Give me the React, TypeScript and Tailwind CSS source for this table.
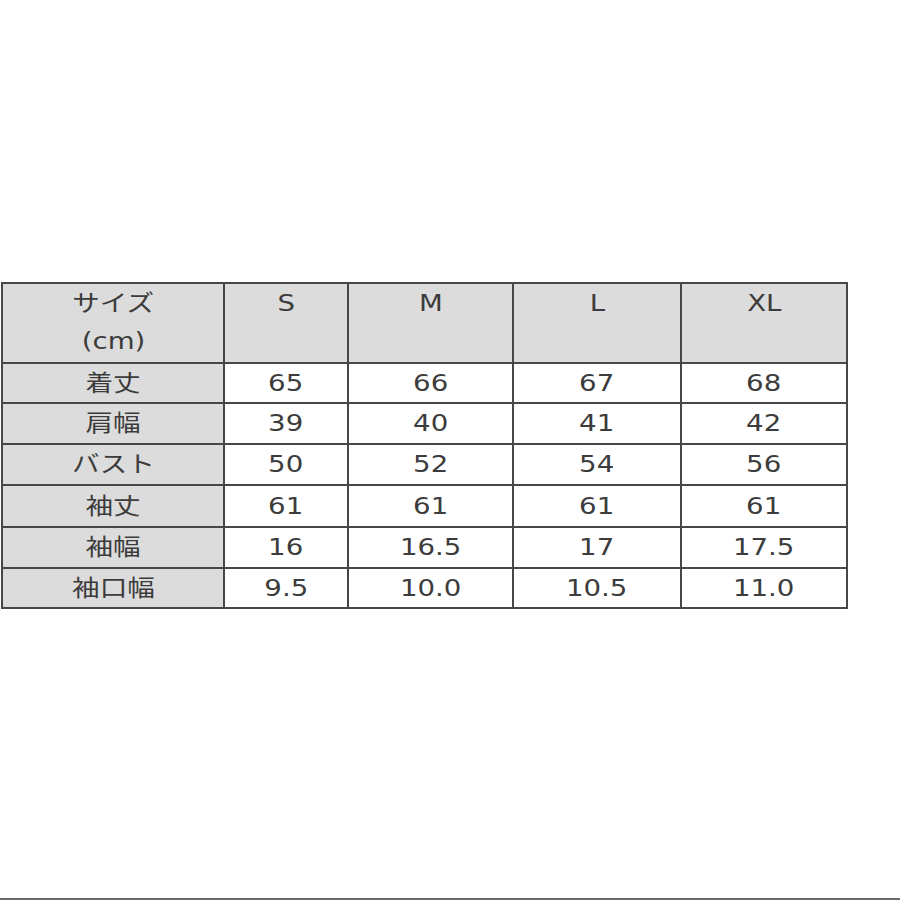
import React from "react";

const cols = ["S", "M", "L", "XL"];
const rows: { label: string; vals: string[]; h: string }[] = [
  { label: "着丈", vals: ["65", "66", "67", "68"], h: "h-[38px]" },
  { label: "肩幅", vals: ["39", "40", "41", "42"], h: "h-[39px]" },
  { label: "バスト", vals: ["50", "52", "54", "56"], h: "h-[39px]" },
  { label: "袖丈", vals: ["61", "61", "61", "61"], h: "h-[40px]" },
  { label: "袖幅", vals: ["16", "16.5", "17", "17.5"], h: "h-[39px]" },
  { label: "袖口幅", vals: ["9.5", "10.0", "10.5", "11.0"], h: "h-[38px]" },
];

function T({ children }: { children: React.ReactNode }) {
  return <span className="inline-block scale-x-[1.2]">{children}</span>;
}

export default function App() {
  return (
    <div
      className="w-[900px] h-[900px] bg-white flex flex-col text-[#3c3c3c] text-[23px]"
      style={{ fontFamily: '"DejaVu Sans", "Noto Sans CJK JP", sans-serif' }}
    >
      <div className="pt-[282px] pl-[1px]">
        <div className="inline-grid grid-cols-[220px_122px_163px_166px_164px] gap-[2px] p-[2px] bg-[#474747]">
          <div className="bg-[#dcdcdc] h-[78px] flex flex-col items-center leading-[38px]">
            <T>サイズ</T>
            <T>(cm)</T>
          </div>
          {cols.map((c) => (
            <div key={c} className="bg-[#dcdcdc] h-[78px] flex justify-center leading-[38px]">
              <T>{c}</T>
            </div>
          ))}
          {rows.map((r) => (
            <React.Fragment key={r.label}>
              <div className={`bg-[#dcdcdc] ${r.h} flex items-center justify-center`}>
                <T>{r.label}</T>
              </div>
              {r.vals.map((v, i) => (
                <div key={i} className={`bg-white ${r.h} flex items-center justify-center`}>
                  <T>{v}</T>
                </div>
              ))}
            </React.Fragment>
          ))}
        </div>
      </div>
      <div className="flex-1" />
      <div className="h-[2px] bg-[#6a6a6a]" />
    </div>
  );
}
